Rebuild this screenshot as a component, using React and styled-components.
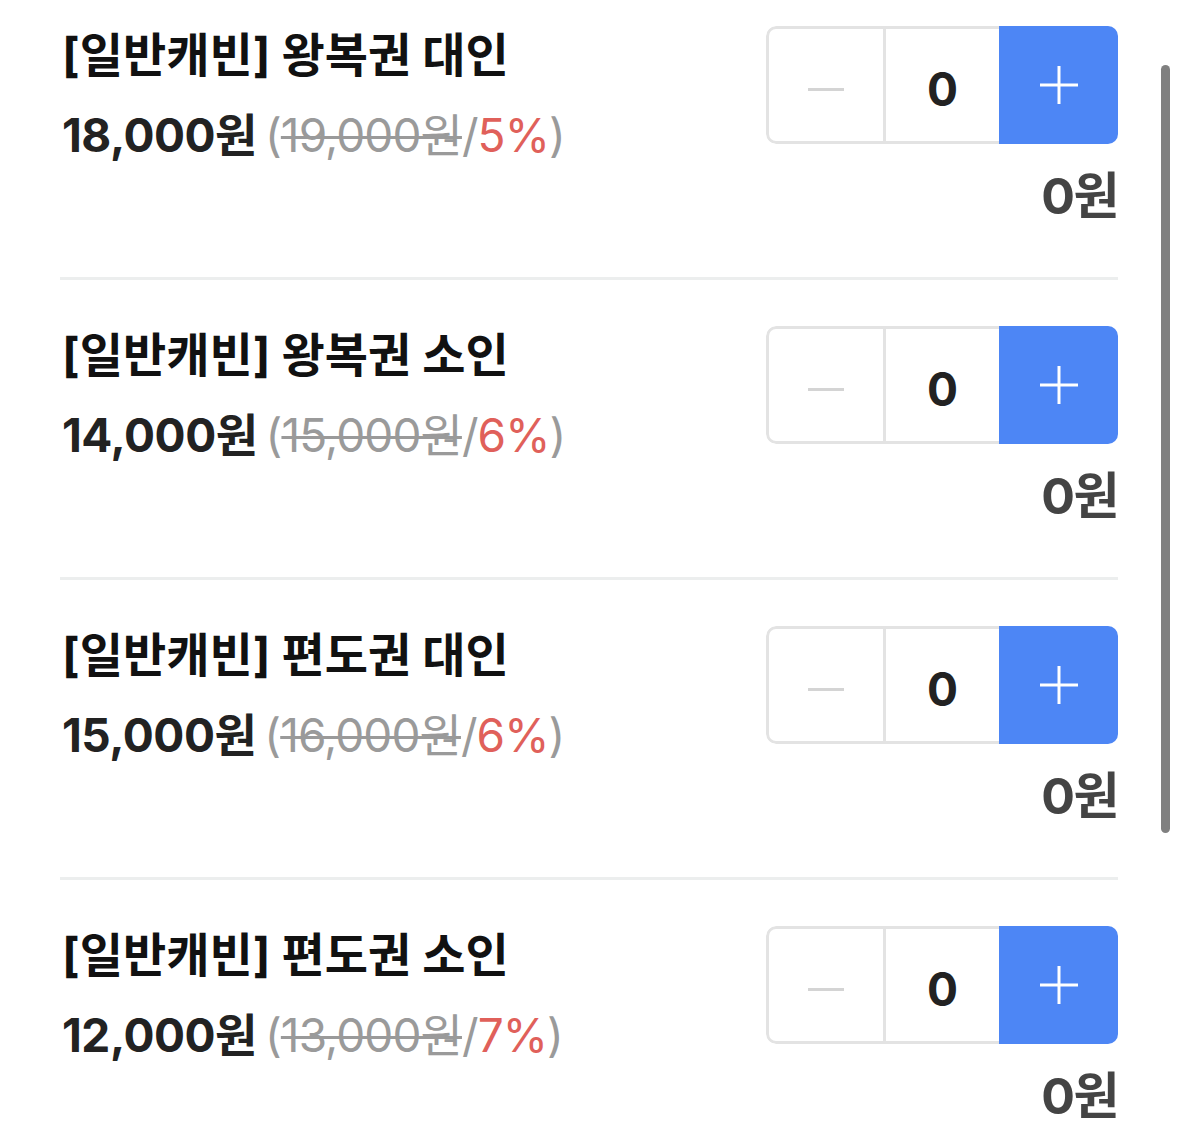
import styled, { createGlobalStyle } from 'styled-components'

const GlobalStyle = createGlobalStyle`
  html, body {
    margin: 0;
    padding: 0;
    background: #fff;
    overflow: hidden;
  }
  body {
    font-family: Inter, "Noto Sans CJK KR", sans-serif;
    color: #222;
  }
`

const items = [
  { name: '[일반캐빈] 왕복권 대인', price: '18,000원', origin: '19,000원', rate: '5%' },
  { name: '[일반캐빈] 왕복권 소인', price: '14,000원', origin: '15,000원', rate: '6%' },
  { name: '[일반캐빈] 편도권 대인', price: '15,000원', origin: '16,000원', rate: '6%' },
  { name: '[일반캐빈] 편도권 소인', price: '12,000원', origin: '13,000원', rate: '7%' },
]

const App = () => {
  return (
    <Page>
      <GlobalStyle />
      <List>
        {items.map((item) => (
          <Row key={item.name}>
            <Info>
              <Title>{item.name}</Title>
              <PriceLine>
                <Price>{item.price}</Price>
                <Discount>
                  (<Origin>{item.origin}</Origin>/<Rate>{item.rate}</Rate>)
                </Discount>
              </PriceLine>
            </Info>
            <Side>
              <Stepper>
                <MinusButton>
                  <Minus />
                </MinusButton>
                <Count>0</Count>
                <PlusButton>
                  <svg width="42" height="42" viewBox="0 0 42 42">
                    <path d="M21 2V40M2 21H40" stroke="#fff" strokeWidth="3" />
                  </svg>
                </PlusButton>
              </Stepper>
              <Total>0원</Total>
            </Side>
          </Row>
        ))}
      </List>
      <ScrollBar />
    </Page>
  )
}

export default App

const Page = styled.div`
  position: relative;
  width: 1179px;
  height: 1139px;
  overflow: hidden;
`

const List = styled.div`
  padding: 0 61px 0 60px;
`

const Row = styled.div`
  display: flex;
  justify-content: space-between;
  align-items: flex-start;
  padding: 46px 0 51px;
  border-bottom: 3px solid #eceeee;

  &:first-child {
    padding-top: 26px;
  }
`

const Info = styled.div`
  display: flex;
  flex-direction: column;
  padding-left: 2px;
`

const Title = styled.div`
  font-size: 47px;
  line-height: 58px;
  font-weight: 700;
  color: #111;
  white-space: nowrap;
`

const PriceLine = styled.div`
  display: flex;
  align-items: baseline;
  gap: 8px;
  margin-top: 23px;
  font-size: 46px;
  line-height: 56px;
  white-space: nowrap;
`

const Price = styled.span`
  font-weight: 700;
  color: #222;
  letter-spacing: -0.01em;
`

const Discount = styled.span`
  font-weight: 400;
  color: #9a9a9a;
  letter-spacing: -0.02em;
`

const Origin = styled.span`
  text-decoration: line-through;
  text-decoration-thickness: 3px;
`

const Rate = styled.span`
  color: #e0605a;
`

const Side = styled.div`
  display: flex;
  flex-direction: column;
  align-items: flex-end;
`

const Stepper = styled.div`
  display: flex;
  width: 352px;
  height: 118px;
  border-radius: 10px;
  overflow: hidden;
`

const Cell = styled.div`
  display: flex;
  align-items: center;
  justify-content: center;
  box-sizing: border-box;
`

const MinusButton = styled(Cell)`
  width: 117px;
  padding-top: 8px;
  border: 3px solid #e3e3e3;
  border-right: none;
  border-radius: 10px 0 0 10px;
`

const Minus = styled.span`
  display: block;
  width: 36px;
  height: 3px;
  background: #d4d4d4;
`

const Count = styled(Cell)`
  width: 116px;
  padding-top: 8px;
  border: 3px solid #e3e3e3;
  border-right: none;
  font-size: 46px;
  font-weight: 700;
  color: #222;
`

const PlusButton = styled(Cell)`
  width: 119px;
  background: #4d86f5;
`

const Total = styled.div`
  margin-top: 22px;
  font-size: 50px;
  line-height: 60px;
  font-weight: 700;
  color: #444;
  letter-spacing: -0.03em;
`

const ScrollBar = styled.div`
  position: absolute;
  left: 1161px;
  top: 65px;
  width: 9px;
  height: 768px;
  border-radius: 5px;
  background: #808080;
`
